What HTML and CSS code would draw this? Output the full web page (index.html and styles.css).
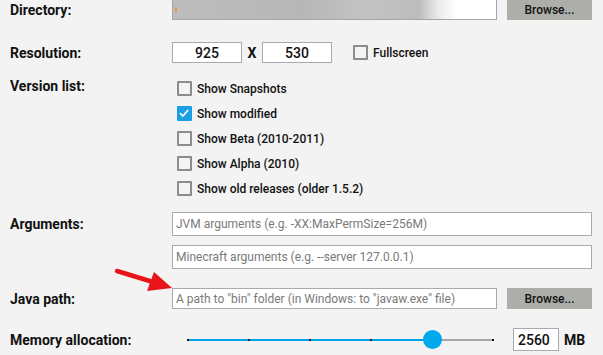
FILE: index.html
```html
<!DOCTYPE html>
<html lang="en">
<head>
    <meta charset="UTF-8">
    <title>Launcher settings</title>
    <link rel="stylesheet" href="styles.css">
</head>
<body>
    <div class="form">
        <div class="row row-dir">
            <div class="lbl">Directory:</div>
            <div class="field">
                <div class="input input-long blurred"><span class="blur-mark"></span></div>
                <button class="btn">Browse...</button>
            </div>
        </div>

        <div class="row row-res">
            <div class="lbl">Resolution:</div>
            <div class="field">
                <div class="input input-num">925</div>
                <span class="times">X</span>
                <div class="input input-num">530</div>
                <label class="check check-full"><span class="box"></span>Fullscreen</label>
            </div>
        </div>

        <div class="row row-versions">
            <div class="lbl">Version list:</div>
            <div class="checks">
                <label class="check"><span class="box"></span>Show Snapshots</label>
                <label class="check"><span class="box checked">
                    <svg viewBox="0 0 14 14" width="14" height="14"><path d="M3 7.2 L5.9 10 L11.2 4" fill="none" stroke="#fff" stroke-width="1.6"/></svg>
                </span>Show modified</label>
                <label class="check"><span class="box"></span>Show Beta (2010-2011)</label>
                <label class="check"><span class="box"></span>Show Alpha (2010)</label>
                <label class="check"><span class="box"></span>Show old releases (older 1.5.2)</label>
            </div>
        </div>

        <div class="row row-args">
            <div class="lbl">Arguments:</div>
            <div class="args">
                <div class="input input-wide placeholder">JVM arguments (e.g. -XX:MaxPermSize=256M)</div>
                <div class="input input-wide placeholder">Minecraft arguments (e.g. --server 127.0.0.1)</div>
            </div>
        </div>

        <div class="row row-java">
            <div class="lbl">Java path:</div>
            <div class="field">
                <div class="input input-long placeholder">A path to "bin" folder (in Windows: to "javaw.exe" file)</div>
                <button class="btn">Browse...</button>
            </div>
        </div>

        <div class="row row-mem">
            <div class="lbl">Memory allocation:</div>
            <div class="field">
                <div class="slider">
                    <div class="track"></div>
                    <div class="track-fill" style="width: 80%"></div>
                    <span class="tick" style="left: 0%"></span>
                    <span class="tick" style="left: 20%"></span>
                    <span class="tick" style="left: 40%"></span>
                    <span class="tick" style="left: 60%"></span>
                    <span class="tick" style="left: 80%"></span>
                    <span class="tick" style="left: 100%"></span>
                    <div class="thumb" style="left: 80%"></div>
                    <span class="tick-label" style="left: 0%">512</span>
                    <span class="tick-label" style="left: 20%">1024</span>
                    <span class="tick-label" style="left: 40%">1536</span>
                    <span class="tick-label" style="left: 60%">2048</span>
                    <span class="tick-label" style="left: 80%">2560</span>
                    <span class="tick-label" style="left: 100%">3072</span>
                </div>
                <div class="input input-mem">2560</div>
                <span class="unit">MB</span>
            </div>
        </div>
    </div>

    <!-- red arrow pointing to the java path box -->
    <svg class="arrow" width="70" height="40" viewBox="110 265 70 40">
        <line x1="117" y1="271" x2="153" y2="282" stroke="#e8141a" stroke-width="4.5" stroke-linecap="round"/>
        <polygon points="172,288 147,291 154,272" fill="#e8141a"/>
    </svg>
</body>
</html>
```

FILE: styles.css
```css
body {
    margin: 0;
    background: #f3f3f3;
    font-family: Roboto, "Liberation Sans", sans-serif;
    color: #111;
    width: 603px;
    height: 355px;
    overflow: hidden;
    position: relative;
}

.row {
    display: grid;
    grid-template-columns: 172px 1fr;
    align-items: center;
}

.lbl {
    padding-left: 10px;
    font-size: 14px;
    font-weight: 700;
    line-height: 20px;
}

.field {
    display: flex;
    align-items: center;
}

.input {
    box-sizing: border-box;
    background: #fff;
    border: 1px solid #aaaaae;
    font-size: 12px;
    display: flex;
    align-items: center;
    padding-left: 3px;
    white-space: nowrap;
    overflow: hidden;
}

.placeholder {
    color: #7a7a7a;
}

.input-long {
    width: 325px;
    height: 21px;
}

.btn {
    margin-left: 10px;
    width: 85px;
    height: 20px;
    border: none;
    background: #adada9;
    font-family: Roboto, "Liberation Sans", sans-serif;
    font-size: 12px;
    font-weight: 500;
    color: #111;
    padding: 0;
}

/* directory */
.row-dir {
    height: 20px;
}

.row-dir .input {
    height: 21px;
    margin-top: -1px;
}

.blurred {
    position: relative;
    background: linear-gradient(90deg, #bdbdbd 0%, #b7b7b8 40%, #c3c3c3 60%, #bcbcbc 76%, #eaeaea 82%, #fff 88%);
    border-color: #a5a5ad;
}

.blur-mark {
    position: absolute;
    left: 2px;
    top: 7px;
    width: 2px;
    height: 5px;
    background: #d99a50;
}

/* resolution */
.row-res {
    margin-top: 20px;
    height: 21px;
}

.input-num {
    width: 70px;
    height: 21px;
    justify-content: center;
    padding: 0;
    font-size: 14px;
    font-weight: 500;
    color: #111;
}

.times {
    width: 20px;
    text-align: center;
    font-size: 14px;
    font-weight: 700;
}

.check {
    display: flex;
    align-items: center;
    font-size: 12px;
    font-weight: 500;
    height: 25px;
}

.check-full {
    margin-left: 21px;
}

.box {
    box-sizing: border-box;
    width: 15px;
    height: 15px;
    border: 2px solid #8c8c8c;
    border-radius: 1px;
    margin-right: 5px;
    display: flex;
}

.box.checked {
    border: none;
    background: #1a9fe2;
}

/* versions */
.row-versions {
    margin-top: 15px;
    align-items: start;
}

.checks {
    padding-left: 5px;
}

/* arguments */
.row-args {
    margin-top: 11px;
    align-items: start;
}

.row-args .lbl {
    line-height: 24px;
}

.args {
    display: flex;
    flex-direction: column;
    gap: 9px;
}

.input-wide {
    width: 420px;
    height: 24px;
}

/* java path */
.row-java {
    margin-top: 19px;
}

.row-java .btn {
    height: 21px;
}

/* memory */
.row-mem {
    margin-top: 19px;
}

.slider {
    position: relative;
    margin-left: 16px;
    width: 305px;
    height: 23px;
}

.track {
    position: absolute;
    left: 0;
    right: 0;
    top: 11px;
    height: 2px;
    background: #a8a8a8;
}

.track-fill {
    position: absolute;
    left: 0;
    top: 11px;
    height: 2px;
    background: #00a2e8;
}

.tick {
    position: absolute;
    top: 11px;
    width: 2px;
    height: 2px;
    margin-left: -1px;
    background: #111;
}

.thumb {
    position: absolute;
    top: 2px;
    width: 19px;
    height: 19px;
    margin-left: -9px;
    border-radius: 50%;
    background: #00a8ec;
}

.tick-label {
    position: absolute;
    top: 24px;
    transform: translateX(-50%);
    font-size: 13px;
    font-weight: 500;
    color: #333;
}

.input-mem {
    margin-left: 20px;
    width: 46px;
    height: 23px;
    font-size: 14px;
    font-weight: 500;
    color: #111;
    padding-left: 4px;
}

.unit {
    margin-left: 5px;
    font-size: 14px;
    font-weight: 700;
}

.arrow {
    position: absolute;
    left: 110px;
    top: 265px;
}
```
